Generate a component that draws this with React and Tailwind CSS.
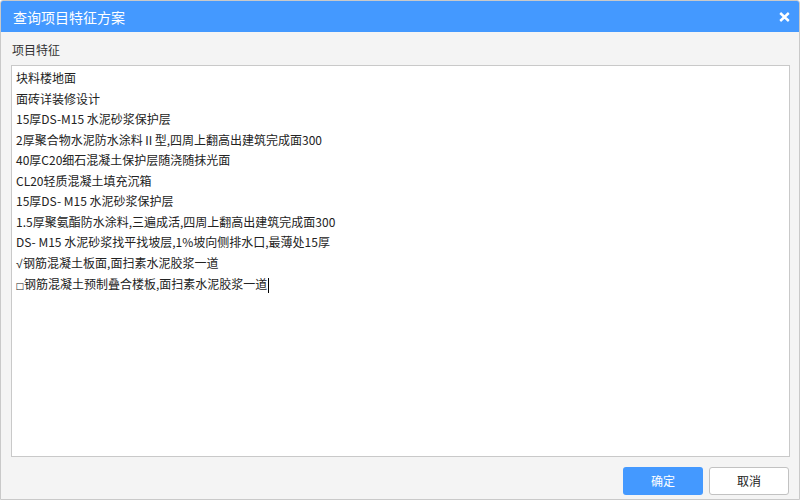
const lines = [
  "块料楼地面",
  "面砖详装修设计",
  "15厚DS-M15 水泥砂浆保护层",
  "2厚聚合物水泥防水涂料Ⅱ型,四周上翻高出建筑完成面300",
  "40厚C20细石混凝土保护层随浇随抹光面",
  "CL20轻质混凝土填充沉箱",
  "15厚DS- M15 水泥砂浆保护层",
  "1.5厚聚氨酯防水涂料,三遍成活,四周上翻高出建筑完成面300",
  "DS- M15 水泥砂浆找平找坡层,1%坡向侧排水口,最薄处15厚",
];

const App = () => {
  return (
    <div
      className="w-[800px] h-[500px] flex flex-col border border-[#c9c9c9] rounded-t-[3px] bg-[#f4f4f4] overflow-hidden"
      style={{ fontFamily: '"Noto Sans CJK SC", "Noto Sans", sans-serif' }}
    >
      {/* title bar */}
      <div className="h-[31px] shrink-0 flex items-center justify-between bg-[#4499ff] pl-[12px] pr-[8px]">
        <span className="text-white text-[14px] leading-none">查询项目特征方案</span>
        <svg width="11" height="10" viewBox="0 0 11 10" className="mr-[1px]">
          <path d="M1.2 1 L9.8 9 M9.8 1 L1.2 9" stroke="#fff" strokeWidth="2.4" />
        </svg>
      </div>
      {/* body */}
      <div className="flex-1 flex flex-col pl-[10px] pr-[9px] pt-[8px]">
        <div className="text-[12px] leading-[20px] text-[#333] pl-[1px]">项目特征</div>
        <div className="mt-[5px] h-[392px] bg-white border border-[#c9c9c9] pl-[4px] pt-[2px] text-[12px] leading-[20.5px] text-[#222]">
          {lines.map((line, i) => (
            <div key={i} className="whitespace-pre">
              {line}
            </div>
          ))}
          <div className="whitespace-pre">
            <span className="font-['Liberation_Sans'] mr-[0.5px]">√</span>
            钢筋混凝土板面,面扫素水泥胶浆一道
          </div>
          <div className="whitespace-pre">
            <span className="font-['DejaVu_Sans'] text-[9px] ml-[-0.5px]">□</span>
            钢筋混凝土预制叠合楼板,面扫素水泥胶浆一道
            <span className="inline-block w-px h-[15px] bg-black align-middle ml-px" />
          </div>
        </div>
        <div className="flex justify-end gap-[6px] mt-[10px] pr-[1px]">
          <button
            type="button"
            className="w-[80px] h-[28px] rounded-[3px] bg-[#4499ff] text-white text-[12px]"
          >
            确定
          </button>
          <button
            type="button"
            className="w-[80px] h-[28px] rounded-[3px] bg-white border border-[#c2c2c2] text-[#222] text-[12px]"
          >
            取消
          </button>
        </div>
      </div>
    </div>
  );
};

export default App;
